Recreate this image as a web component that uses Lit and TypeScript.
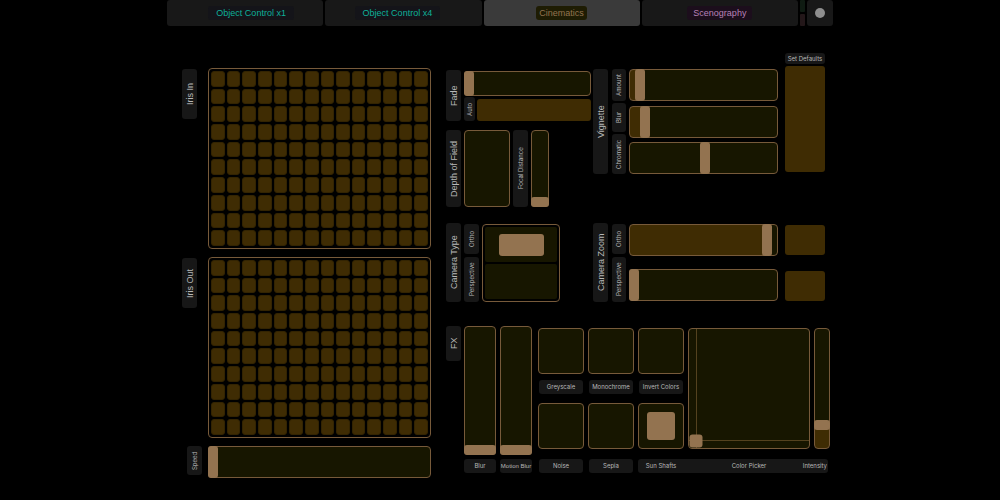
import { LitElement, html, css, nothing } from "lit";
import { customElement, state } from "lit/decorators.js";

interface Tab {
  id: string;
  name: string;
  tone: string;
  lean?: string;
}

const TABS: Tab[] = [
  { id: "one", name: "Object Control x1", tone: "teal", lean: "lean-end" },
  { id: "four", name: "Object Control x4", tone: "teal", lean: "lean-start" },
  { id: "cinematics", name: "Cinematics", tone: "amber" },
  { id: "scenography", name: "Scenography", tone: "violet" },
];

const IRIS_CELLS = Array.from({ length: 140 }, (_, i) => i + 1);

@customElement("app-root")
export class AppRoot extends LitElement {
  static styles = css`
    :host {
      --line: #775a3a;
      --well: #171600;
      --amber: #3f2c03;
      --knob: #937350;
      --tag: #171717;
      display: block;
      min-height: 100vh;
      background: #000;
      color: #b8b8b8;
      font: 9px/14px "Liberation Sans", Arial, sans-serif;
    }
    * {
      box-sizing: border-box;
    }
    button,
    input {
      appearance: none;
      margin: 0;
      padding: 0;
      border: 0;
      font: inherit;
      color: inherit;
      min-width: 0;
      min-height: 0;
    }
    .page {
      width: 66.8%;
      min-width: 640px;
      margin: 0 auto;
    }

    /* Top tabs */
    .tabs {
      display: grid;
      grid-template-columns: repeat(4, minmax(0, 1fr)) 5px 26px;
      gap: 2px;
      height: 26px;
      padding: 0 1px;
    }
    .tab {
      display: flex;
      justify-content: center;
      align-items: center;
      border-radius: 3px;
      background: #181818;
    }
    .tab.active {
      background: #3a3a3a;
    }
    .lean-end {
      padding-left: 12px;
    }
    .lean-start {
      padding-right: 12px;
    }
    .pill {
      border-radius: 3px;
      padding: 0 8px;
    }
    .teal {
      background: #141419;
      color: #0eb09a;
    }
    .amber {
      background: #1e1c03;
      color: #937350;
      padding: 0 3px;
    }
    .violet {
      background: #1c0e1c;
      color: #b881b8;
      padding: 0 6px;
    }
    .lamps {
      display: grid;
      gap: 2px;
    }
    .lamp {
      border-radius: 1px;
      background: #0f1b12;
    }
    .lamp.off {
      background: #231719;
    }
    .record {
      border-radius: 3px;
      background: #181818;
      display: grid;
      place-items: center;
    }
    .dot {
      width: 10px;
      height: 10px;
      border-radius: 50%;
      background: #8e8e8e;
    }

    /* Shared pieces */
    .tag {
      display: flex;
      justify-content: center;
      align-items: center;
      border-radius: 3px;
      background: var(--tag);
      white-space: nowrap;
    }
    .side {
      writing-mode: vertical-rl;
      transform: rotate(180deg);
      width: 15px;
    }
    .small {
      font: 6px/14px Inter, sans-serif;
    }
    .tiny {
      font: 6px/14px "Liberation Sans", Arial, sans-serif;
    }
    .well {
      display: block;
      width: 100%;
      border: 1px solid var(--line);
      border-radius: 4px;
      background: var(--well);
    }
    .trigger {
      display: block;
      width: 100%;
      border-radius: 3px;
      background: var(--amber);
    }
    .h14 { height: 14px; }
    .h30 { height: 30px; }
    .h32 { height: 32px; }
    .h50 { height: 50px; }

    .range {
      background: linear-gradient(to right, var(--amber) var(--fill), var(--well) var(--fill));
    }
    .range.upright {
      writing-mode: vertical-lr;
      direction: rtl;
      background: linear-gradient(to top, var(--amber) var(--fill), var(--well) var(--fill));
    }
    .range::-webkit-slider-runnable-track {
      width: 100%;
      height: 100%;
    }
    .range::-webkit-slider-thumb {
      appearance: none;
      width: 8px;
      height: 100%;
      border-radius: 2px;
      background: var(--knob);
      box-shadow: 0 0 0 1px var(--knob);
    }
    .range.upright::-webkit-slider-thumb {
      width: 100%;
      height: 8px;
    }

    .toggle {
      display: grid;
      place-items: center;
    }
    .toggle:checked::before {
      content: "";
      width: 28px;
      height: 28px;
      border-radius: 3px;
      background: var(--knob);
    }

    /* Two halves of the board */
    .board {
      display: grid;
      grid-template-columns: minmax(0, 249fr) minmax(0, 384fr);
      column-gap: 15px;
      padding: 27px 4px 20px 16px;
    }
    .iris {
      display: grid;
      grid-template-columns: 20px minmax(0, 1fr);
      gap: 8px 6px;
      align-content: start;
      padding-top: 15px;
    }
    .iris .tag {
      margin-top: 1px;
    }
    .iris .last {
      height: 29px;
      margin-top: 0;
      justify-self: end;
    }
    .matrix {
      display: grid;
      grid-template-columns: repeat(14, minmax(0, 1fr));
      grid-auto-rows: minmax(0, 1fr);
      gap: 2px;
      height: 181px;
      padding: 2px;
      border: 1px solid var(--line);
      border-radius: 4px;
    }
    .cell {
      border: 1px solid #332402;
      border-radius: 3px;
      background: var(--amber);
    }

    .rows {
      display: grid;
      align-content: start;
    }
    .pair {
      display: grid;
      grid-template-columns: minmax(0, 145fr) minmax(0, 237fr);
      column-gap: 2px;
    }
    .optics {
      padding-top: 17px;
    }
    .fade {
      display: grid;
      grid-template-columns: 15px minmax(0, 1fr);
      column-gap: 3px;
      height: 51px;
      margin-bottom: 9px;
    }
    .fade-body {
      display: grid;
      grid-template-columns: 11px minmax(0, 1fr);
      grid-template-rows: 26px 24px;
      gap: 1px 2px;
    }
    .fade-range {
      grid-column: 1 / 3;
      height: 25px;
      margin-top: 1px;
    }
    .fade-body .side {
      width: 11px;
      line-height: 11px;
    }
    .fade-body .trigger {
      height: 22px;
      align-self: end;
    }
    .depth {
      display: grid;
      grid-template-columns: 15px 46px 15px 18px;
      column-gap: 3px;
      height: 77px;
    }

    .vignette,
    .zoom {
      display: grid;
      grid-template-columns: 15px 18px minmax(0, 1fr) 40px;
      padding-right: 5px;
    }
    .names {
      display: grid;
      gap: 2px;
      margin-left: 4px;
      width: 14px;
    }
    .names .side {
      width: 14px;
    }
    .sliders {
      display: grid;
      align-content: space-between;
      padding: 0 7px 0 3px;
    }
    .vignette > .lowered {
      margin-top: 16px;
      height: 105px;
    }
    .vignette .names {
      grid-template-rows: 32px 29px 40px;
    }
    .defaults {
      display: grid;
      grid-template-rows: 11px 106px;
      gap: 2px;
      align-content: start;
    }
    .defaults .tag {
      line-height: 11px;
    }

    .camera {
      height: 79px;
      margin-top: 16px;
    }
    .camera .names {
      grid-template-rows: 30px 45px;
      gap: 3px;
      padding-top: 1px;
    }
    .camera-type {
      display: grid;
      grid-template-columns: 15px 15px 78px;
      column-gap: 3px;
    }
    .camera-type .names {
      margin-left: 0;
      width: 15px;
    }
    .camera-type .names .side {
      width: 15px;
    }
    .choices {
      display: grid;
      grid-template-rows: 1fr 1fr;
      gap: 2px;
      margin-top: 1px;
      padding: 2px;
      border: 1px solid var(--line);
      border-radius: 4px;
    }
    .choice {
      display: grid;
      place-items: center;
      border-radius: 2px;
      background: var(--well);
    }
    .choice:checked::before {
      content: "";
      width: 45px;
      height: 22px;
      border-radius: 3px;
      background: var(--knob);
    }
    .zoom .sliders {
      padding-top: 1px;
      padding-bottom: 1px;
    }
    .zoom .buttons {
      display: grid;
      align-content: space-between;
      padding: 2px 0 1px;
    }

    /* Effects */
    .fx {
      display: grid;
      grid-template-columns: 15px minmax(0, 77fr) minmax(0, 292fr);
      margin-top: 24px;
    }
    .fx-name {
      height: 35px;
    }
    .blurs {
      display: grid;
      grid-template-columns: minmax(0, 1fr) minmax(0, 1fr);
      grid-template-rows: 129px 14px;
      gap: 4px;
      margin: 0 6px 0 3px;
    }
    .blurs .upright {
      height: 129px;
    }
    .effects {
      display: grid;
      grid-template-columns:
        minmax(0, 46fr) minmax(0, 46fr) minmax(0, 46fr)
        minmax(0, 122fr) minmax(0, 16fr);
      grid-template-rows: 46px 29px 46px 24px;
      column-gap: 4px;
      padding-top: 2px;
      align-content: start;
    }
    .under {
      margin: 6px 1px 0;
    }
    .foot {
      align-self: end;
      margin: 0 1px;
    }
    .toggle {
      height: 46px;
    }
    .picker {
      grid-area: 1 / 4 / 4 / 5;
      position: relative;
      height: 121px;
    }
    .strength {
      grid-area: 1 / 5 / 4 / 6;
      height: 121px;
    }
    .hair {
      position: absolute;
      background: #54421f;
    }
    .hair.tall {
      top: 0;
      bottom: 0;
      width: 1px;
    }
    .hair.wide {
      left: 0;
      right: 0;
      height: 1px;
    }
    .puck {
      position: absolute;
      width: 13px;
      height: 13px;
      border-radius: 3px;
      background: var(--knob);
      transform: translate(-50%, 50%);
    }
    .strip {
      grid-column: 3 / 6;
      display: grid;
      grid-template-columns: subgrid;
      align-self: end;
      margin-right: 2px;
      border-radius: 3px;
      background: var(--tag);
      text-align: center;
      white-space: nowrap;
    }
    .strip .end {
      justify-self: end;
      padding-right: 1px;
    }
  `;

  @state() private tab = "cinematics";
  @state() private values: Record<string, number> = {
    speed: 0,
    fade: 0,
    focal: 0,
    amount: 4,
    vblur: 8,
    chromatic: 51,
    zoomOrtho: 96,
    zoomPerspective: 0,
    blur: 0,
    motion: 0,
    intensity: 17,
  };
  private pick = { x: 6, y: 6 };

  private range(id: string, cls: string, centred = false) {
    const value = this.values[id];
    return html`<input
      id=${id}
      type="range"
      class="well range ${cls}"
      style="--fill:${centred ? 0 : value}%"
      .value=${String(value)}
      @input=${(e: Event) => {
        this.values = { ...this.values, [id]: Number((e.target as HTMLInputElement).value) };
      }}
    />`;
  }

  private toggle(id: string, checked = false) {
    return html`<input id=${id} type="checkbox" class="well toggle" ?checked=${checked} />`;
  }

  private matrix(name: string) {
    return html`<div class="matrix" role="group" aria-label=${name}>
      ${IRIS_CELLS.map((n) => html`<button class="cell" aria-label="${name} ${n}"></button>`)}
    </div>`;
  }

  private renderTabs() {
    return html`<nav class="tabs">
      ${TABS.map(
        (t) => html`<button
          class="tab ${t.lean ?? ""} ${t.id === this.tab ? "active" : ""}"
          aria-current=${t.id === this.tab ? "page" : nothing}
          @click=${() => (this.tab = t.id)}
        >
          <span class="pill ${t.tone}">${t.name}</span>
        </button>`
      )}
      <div class="lamps"><span class="lamp"></span><span class="lamp off"></span></div>
      <button class="record" aria-label="Record"><span class="dot"></span></button>
    </nav>`;
  }

  private renderIris() {
    return html`<section class="iris">
      <span class="tag side h50">Iris In</span>
      ${this.matrix("Iris In")}
      <span class="tag side h50">Iris Out</span>
      ${this.matrix("Iris Out")}
      <label class="tag side small last" for="speed">Speed</label>
      ${this.range("speed", "h32")}
    </section>`;
  }

  private renderOptics() {
    return html`<div class="pair">
      <div class="optics">
        <div class="fade">
          <label class="tag side" for="fade">Fade</label>
          <div class="fade-body">
            ${this.range("fade", "fade-range")}
            <label class="tag side small" for="auto">Auto</label>
            <button id="auto" class="trigger"></button>
          </div>
        </div>
        <div class="depth">
          <label class="tag side" for="dof">Depth of Field</label>
          <input id="dof" type="checkbox" class="well" />
          <label class="tag side small" for="focal">Focal Distance</label>
          ${this.range("focal", "upright")}
        </div>
      </div>
      <div class="vignette">
        <span class="tag side lowered">Vignette</span>
        <div class="names lowered">
          <label class="tag side small" for="amount">Amount</label>
          <label class="tag side small" for="vblur">Blur</label>
          <label class="tag side small" for="chromatic">Chromatic</label>
        </div>
        <div class="sliders lowered">
          ${this.range("amount", "h32")} ${this.range("vblur", "h32")}
          ${this.range("chromatic", "h32", true)}
        </div>
        <div class="defaults">
          <label class="tag small" for="defaults">Set Defaults</label>
          <button id="defaults" class="trigger"></button>
        </div>
      </div>
    </div>`;
  }

  private renderCamera() {
    return html`<div class="pair camera">
      <div class="camera-type">
        <span class="tag side">Camera Type</span>
        <div class="names">
          <label class="tag side small" for="ortho">Ortho</label>
          <label class="tag side small" for="perspective">Perspective</label>
        </div>
        <div class="choices">
          <input id="ortho" type="radio" name="camera" class="choice" checked />
          <input id="perspective" type="radio" name="camera" class="choice" />
        </div>
      </div>
      <div class="zoom">
        <span class="tag side">Camera Zoom</span>
        <div class="names">
          <label class="tag side small" for="zoomOrtho">Ortho</label>
          <label class="tag side small" for="zoomPerspective">Perspective</label>
        </div>
        <div class="sliders">
          ${this.range("zoomOrtho", "h32")} ${this.range("zoomPerspective", "h32")}
        </div>
        <div class="buttons">
          <button class="trigger h30" aria-label="Reset ortho zoom"></button>
          <button class="trigger h30" aria-label="Reset perspective zoom"></button>
        </div>
      </div>
    </div>`;
  }

  private renderEffects() {
    const { x, y } = this.pick;
    return html`<div class="fx">
      <span class="tag side fx-name">FX</span>
      <div class="blurs">
        ${this.range("blur", "upright")} ${this.range("motion", "upright")}
        <label class="tag small" for="blur">Blur</label>
        <label class="tag tiny" for="motion">Motion Blur</label>
      </div>
      <div class="effects">
        ${this.toggle("grey")} ${this.toggle("mono")} ${this.toggle("invert")}
        <label class="tag small h14 under" for="grey">Greyscale</label>
        <label class="tag small h14 under" for="mono">Monochrome</label>
        <label class="tag small h14 under" for="invert">Invert Colors</label>
        ${this.toggle("noise")} ${this.toggle("sepia")} ${this.toggle("shafts", true)}
        <div class="well picker" role="group" aria-label="Color Picker">
          <span class="hair tall" style="left:${x}%"></span>
          <span class="hair wide" style="bottom:${y}%"></span>
          <button class="puck" aria-label="Color" style="left:${x}%;bottom:${y}%"></button>
        </div>
        ${this.range("intensity", "upright strength")}
        <label class="tag small h14 foot" for="noise">Noise</label>
        <label class="tag small h14 foot" for="sepia">Sepia</label>
        <div class="strip small">
          <label for="shafts">Sun Shafts</label>
          <span>Color Picker</span>
          <label class="end" for="intensity">Intensity</label>
        </div>
      </div>
    </div>`;
  }

  render() {
    return html`<div class="page">
      ${this.renderTabs()}
      <main class="board">
        ${this.renderIris()}
        <section class="rows">
          ${this.renderOptics()} ${this.renderCamera()} ${this.renderEffects()}
        </section>
      </main>
    </div>`;
  }
}
